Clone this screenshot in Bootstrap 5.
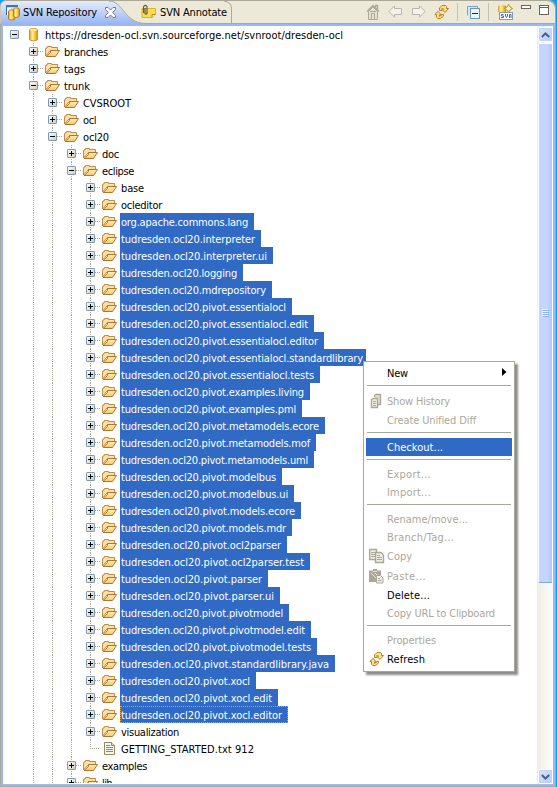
<!DOCTYPE html>
<html lang="en">
<head>
<meta charset="utf-8">
<title>SVN Repository</title>
<link href="https://cdn.jsdelivr.net/npm/bootstrap@5.3.0/dist/css/bootstrap.min.css" rel="stylesheet">
<style>
html,body{height:100%;overflow:hidden}
body{font:11px/17px "DejaVu Sans Condensed","DejaVu Sans",sans-serif;font-stretch:condensed;color:#000;background:#00a0f4;-webkit-font-smoothing:none}
svg{display:block;flex:none}
.view-frame{width:556px;height:787px;background:#aca899;border-radius:6px 7px 0 0;overflow:hidden}
.tabbar{height:24px;width:556px}
.tabbar-bg{left:0;top:0;z-index:0}
.tabbar-row{z-index:1;height:24px}
.tab-text{line-height:18px;margin-top:2px;white-space:nowrap}
.view-body{margin:0 1px 1px;background:#9ab7f2;padding:2px 2px 2px;height:762px}
.view-inner{background:#fff}
.tree{padding-left:2px;overflow:hidden;height:757px}
.tree-line{height:17px}
.guide{width:19px;height:17px;flex:none}
.vline{background:repeating-linear-gradient(#aca899 0 1px,transparent 1px 2px) 9px 0/1px 100% no-repeat}
.vhalf{background-size:1px 9px}
.toggle-cell{width:19px;padding-left:5px}
.hline{height:1px;width:5px;background:repeating-linear-gradient(90deg,#aca899 0 1px,transparent 1px 2px)}
.hline.long{width:10px}
.node-icon{width:16px;height:16px;margin:1px 2px 0 2px}
.label{height:17px;line-height:19px;padding-left:1px;white-space:nowrap}
.picked{background:#316ac5;color:#fff}
.focused{outline:1px dotted #e0a040;outline-offset:-1px}
.scroller{width:16px;background:linear-gradient(90deg,#eeede5,#fefefb);padding:1px 0 0 1px}
.sbtn{width:15px;height:15px;border:1px solid #fff;border-radius:2px;background:linear-gradient(135deg,#dce6fe,#b4c9fa);box-shadow:inset 0 0 0 1px #c0d1fa}
.thumb{height:540px;margin-top:1px;width:15px;border:1px solid #fff;border-bottom-color:#88a4e0;border-radius:2px;background:linear-gradient(90deg,#c2d3fd,#c8d6fb 60%,#b2c8f8)}
.ctx{left:363px;top:361px;width:152px;height:311px;background:#fff;border:1px solid #aca899;padding:2px;box-shadow:3px 3px 2px rgba(0,0,0,.45);z-index:5}
.ctx-item{height:18px;padding-left:3px;color:#000;white-space:nowrap}
.ctx-item.tall{height:20px}
.ctx-item.off{color:#aca899}
.ctx-item.hot{background:#316ac5;color:#fff}
.ctx-icon{width:18px;flex:none}
.ctx-sep{height:9px;padding:3px 1px 0}
.ctx-sep div{height:1px;background:#aca899}
.tsep{width:1px;height:18px;background:#c5c2ae}
</style>
<script src="https://cdn.jsdelivr.net/npm/bootstrap@5.3.0/dist/js/bootstrap.bundle.min.js"></script>
</head>
<body>
<svg width="0" height="0" class="position-absolute">
<defs>
<linearGradient id="gold" x1="0" x2="1"><stop offset="0" stop-color="#e09a1c"/><stop offset=".35" stop-color="#fff0a0"/><stop offset=".65" stop-color="#f8cc40"/><stop offset="1" stop-color="#d08a10"/></linearGradient>
<linearGradient id="flap" x1="0" y1="0" x2="0" y2="1"><stop offset="0" stop-color="#fff0c0"/><stop offset="1" stop-color="#f6c868"/></linearGradient>
<linearGradient id="boxg" x1="0" y1="0" x2="1" y2="1"><stop offset="0" stop-color="#fff"/><stop offset="1" stop-color="#cfc9b8"/></linearGradient>
<linearGradient id="tabg" x1="0" y1="0" x2="0" y2="1"><stop offset="0" stop-color="#e3ecfc"/><stop offset="1" stop-color="#99b6f2"/></linearGradient>
<symbol id="i-folder" viewBox="0 0 16 16"><path d="M.5 12V4.500H1.500V3.500H2.500V2.500H6.500V3.500H12.500V6.500H5.500L.5 12" fill="#fbe2a4" stroke="#c08a48"/><path d="M1 12.500 5.500 8.500V6.500H14.500L10.500 12.500Z" fill="url(#flap)" stroke="#b4742c"/></symbol>
<symbol id="i-plus" viewBox="0 0 9 9"><rect x=".5" y=".5" width="8" height="8" rx=".6" fill="url(#boxg)" stroke="#7898b5"/><path d="M2 4.500H7M4.500 2V7" stroke="#000"/></symbol>
<symbol id="i-minus" viewBox="0 0 9 9"><rect x=".5" y=".5" width="8" height="8" rx=".6" fill="url(#boxg)" stroke="#7898b5"/><path d="M2 4.500H7" stroke="#000"/></symbol>
<symbol id="i-db" viewBox="0 0 16 16"><path d="M3.500 3V12.500C3.500 14.200 11.500 14.200 11.500 12.500V3C11.500 1 3.500 1 3.500 3Z" fill="url(#gold)" stroke="#d0942a"/><ellipse cx="7.500" cy="2.900" rx="3.500" ry="1.100" fill="#ffe98a"/></symbol>
<symbol id="i-file" viewBox="0 0 16 16"><path d="M2.500 1.500H9.500L12.500 4.500V13.500H2.500Z" fill="#f4f7fe" stroke="#9a8a50"/><path d="M9.500 1.500V4.500H12.500" fill="#e8d9a0" stroke="#9a8a50"/><path d="M4 4.500H8M4 6.500H11M4 8.500H11M4 10.500H11" stroke="#6a88c8"/></symbol>
<symbol id="i-refresh" viewBox="0 0 16 16"><path d="M5.500 6.500V4L8 1.500H11.500L12.500 2.500V4.500H14.500L11 8.500 7.500 4.800H9.500L8 6.500Z" fill="#fde088" stroke="#bd801c" stroke-linejoin="round"/><path d="M.8 10.500 4 7.500 7.500 10.800H5.500V12.500L8 10.500H9.500V12L6.500 14.500H3.500L2.500 13.500V10.500Z" fill="#fde088" stroke="#bd801c" stroke-linejoin="round"/></symbol>
</defs>
</svg>

<div class="view-frame position-relative">
  <div class="tabbar position-relative">
    <svg class="tabbar-bg position-absolute" width="556" height="24" viewBox="0 0 556 24">
      <path d="M0 24V6Q1 1 6 .5H547Q554 1 555.500 8V24Z" fill="#ece9d8" stroke="#aca899"/>
      <path d="M1 24V6Q2 1.500 6 1.500H109C124 1.500 124 23.500 146 23.500V24Z" fill="url(#tabg)"/>
      <path d="M109 1C124 1.500 124 23.500 146 23.500H556M224 1Q231.500 2 231.500 9V23" fill="none" stroke="#aca899"/>
    </svg>
    <div class="tabbar-row d-flex align-items-center position-relative">
      <svg width="17" height="18" style="margin-left:5px" viewBox="0 -1 17 18"><path d="M1.500 11V2.500H12.500" fill="none" stroke="#3564b0"/><path d="M1 2H13" stroke="#3e72c8" stroke-width="2"/><path d="M2 4H6V11H2Z" fill="#fff"/><path d="M3.500 7V15C4 16.300 9 16.300 10 15V7C9 5.500 4 5.500 3.500 7Z" fill="url(#gold)" stroke="#c07c14"/><path d="M8.500 5V12C9 14 13.500 14 14.500 12V5C13.500 3.500 9 3.500 8.500 5Z" fill="url(#gold)" stroke="#c07c14"/></svg>
      <span class="tab-text" data-w="74" style="margin-left:1px">SVN Repository</span>
      <svg width="11" height="12" style="margin-left:8px" viewBox="0 -1 11 12"><path d="M.5.5H3L5.500 3 8 .5H10.500V2.500L7.500 5.500 10.500 8.500V10.500H8L5.500 8 3 10.500H.5V8.500L3.500 5.500.5 2.500Z" fill="#fff" stroke="#77778a"/></svg>
      <svg width="16" height="16" style="margin-left:25px" viewBox="0 0 16 16"><path d="M1 4.500H14.500V10.500L11 13.500H1Z" fill="#fbdc50" stroke="#e2b414"/><path d="M14.500 10.500H11V13.500" fill="#fff3b0" stroke="#b98a10"/><path d="M2.500 9V3Q4 0 6 2.500V9.500Q4.500 11 4 9V4" fill="none" stroke="#5b5b60" stroke-width="1.200"/></svg>
      <span class="tab-text" data-w="67" style="margin-left:3px">SVN Annotate</span>
      <div class="ms-auto d-flex align-items-center">
        <svg width="14" height="16" viewBox="0 0 14 16"><path d="M1 7.500 7 1.500 13 7.500M9.500 3V1.500H11.500V6" fill="none" stroke="#aca899" stroke-width="1.400"/><path d="M2.500 7.500V15.500H11.500V7.500L7 3Z" fill="#e6e2d0" stroke="#aca899"/><path d="M5.500 15V9.500H8.500V15M4 7.500H10" fill="none" stroke="#aca899"/></svg>
        <svg width="15" height="14" style="margin-left:8px" viewBox="0 -.5 15 14"><path d="M.8 6 6.500.5V3H13.500V9H6.500V11.500Z" fill="#f4f2ea" stroke="#b7b5ac"/></svg>
        <svg width="15" height="14" style="margin-left:8px" viewBox="0 -.5 15 14"><path d="M14.200 6 8.500.5V3H1.500V9H8.500V11.500Z" fill="#f4f2ea" stroke="#b7b5ac"/></svg>
        <svg width="16" height="16" style="margin-left:8px"><use href="#i-refresh"/></svg>
        <div class="tsep" style="margin-left:7px"></div>
        <svg width="14" height="16" style="margin-left:9px" viewBox="0 -2 14 16"><path d="M.5 9.500V.5H10.500V3" fill="#cfe5f5" stroke="#7aa6c8"/><rect x="3.500" y="2.500" width="9" height="10" fill="#e8f7ff" stroke="#6a94b8"/><path d="M5 7.500H11" stroke="#102858"/></svg>
        <div class="tsep" style="margin-left:7px"></div>
        <svg width="16" height="16" style="margin-left:8px" viewBox="0 0 16 16"><path d="M1 2V8H9V2Q5 0 1 2Z" fill="url(#gold)"/><path d="M11.500.5 13 3 15.500 4.500 13 6 11.500 8.500 10 6 7.500 4.500 10 3Z" fill="#fff3b0" stroke="#c48a18"/><rect x="2.500" y="8.500" width="13" height="7" fill="#fff" stroke="#8a98b8"/><path d="M6.500 10.500H4.500V12H6.500V13.500H4M8.500 10V12L9.500 13.500 10.500 12V10M12.500 14V10.500H14V14" fill="none" stroke="#506898"/></svg>
        <svg width="10" height="16" style="margin-left:8px" viewBox="0 0 10 16"><rect x=".5" y="1.500" width="9" height="3" fill="#fff" stroke="#66645c"/></svg>
        <svg width="10" height="16" style="margin:0 7px 0 8px" viewBox="0 0 10 16"><rect x=".5" y="1.500" width="9" height="9" fill="#fff" stroke="#66645c"/><path d="M0 3.500H10" stroke="#66645c"/></svg>
      </div>
    </div>
  </div>

  <div class="view-body">
    <div class="view-inner d-flex h-100">
      <div class="tree flex-grow-1" id="tree"></div>
      <div class="scroller d-flex flex-column">
        <div class="sbtn d-flex align-items-center justify-content-center"><svg width="9" height="6" viewBox="0 0 9 6"><path d="M.8 5 4.500 1.500 8.200 5" fill="none" stroke="#4d6185" stroke-width="2"/></svg></div>
        <div class="thumb d-flex align-items-center justify-content-center"><svg width="8" height="9" viewBox="0 0 8 9"><path d="M0 .5H6M0 2.500H6M0 4.500H6M0 6.500H6" stroke="#eef4fe"/><path d="M1 1.500H7M1 3.500H7M1 5.500H7M1 7.500H7" stroke="#8cb0f8"/></svg></div>
        <div class="sbtn mt-auto d-flex align-items-center justify-content-center"><svg width="9" height="6" viewBox="0 0 9 6"><path d="M.8 1 4.500 4.500 8.200 1" fill="none" stroke="#4d6185" stroke-width="2"/></svg></div>
      </div>
    </div>
  </div>

  <div class="ctx position-absolute">
    <div class="ctx-item d-flex align-items-center"><span class="ctx-icon"></span><span data-w="21">New</span><svg class="ms-auto" style="margin:-2px 5px 0 0" width="5" height="8" viewBox="0 0 5 8"><path d="M0 0 4.500 4 0 8Z"/></svg></div>
    <div class="ctx-sep"><div></div></div>
    <div class="ctx-item tall off d-flex align-items-center"><span class="ctx-icon"><svg width="16" height="16" viewBox="0 0 16 16"><path d="M5.500 4V2.500L7 1.500H11.500V11.500H9" fill="#e2dfcc" stroke="#aca899" stroke-width="1.400"/><path d="M2.500 6.500 4 5.500H8.500V14.500H2.500Z" fill="#f1efe2" stroke="#aca899" stroke-width="1.400"/><path d="M4 8.500H7M4 10.500H7M4 12.500H7" stroke="#aca899"/></svg></span><span data-w="63">Show History</span></div>
    <div class="ctx-item off d-flex align-items-center"><span class="ctx-icon"></span><span data-w="89">Create Unified Diff</span></div>
    <div class="ctx-sep"><div></div></div>
    <div class="ctx-item hot d-flex align-items-center"><span class="ctx-icon"></span><span data-w="56">Checkout...</span></div>
    <div class="ctx-sep"><div></div></div>
    <div class="ctx-item off d-flex align-items-center"><span class="ctx-icon"></span><span data-w="44">Export...</span></div>
    <div class="ctx-item off d-flex align-items-center"><span class="ctx-icon"></span><span data-w="44">Import...</span></div>
    <div class="ctx-sep"><div></div></div>
    <div class="ctx-item off d-flex align-items-center"><span class="ctx-icon"></span><span data-w="81">Rename/move...</span></div>
    <div class="ctx-item off d-flex align-items-center"><span class="ctx-icon"></span><span data-w="67">Branch/Tag...</span></div>
    <div class="ctx-item tall off d-flex align-items-center"><span class="ctx-icon"><svg width="16" height="16" viewBox="0 0 16 16"><path d="M.700 1.500H7.500V11.500H.700Z" fill="#f1efe2" stroke="#aca899" stroke-width="1.400"/><path d="M2 4.500H6M2 6.500H6M2 8.500H6" stroke="#aca899"/><path d="M6.500 4.500H12L14.500 7V14.500H6.500Z" fill="#f1efe2" stroke="#aca899" stroke-width="1.400"/><path d="M8 7.500H11M8 9.500H13M8 11.500H13" stroke="#aca899"/></svg></span><span data-w="25">Copy</span></div>
    <div class="ctx-item tall off d-flex align-items-center"><span class="ctx-icon"><svg width="16" height="16" viewBox="0 0 16 16"><path d="M0 2.500H4V1H8V2.500H12V14H0Z" fill="#aca899"/><path d="M4 3.500H8M2 5 7 10M6 5 9 8" stroke="#e6e3d4"/><path d="M7.500 7.500H11.500L14 10V15H7.500Z" fill="#f1efe2" stroke="#aca899"/><path d="M9 10.500H11M9 12.500H12.500" stroke="#aca899"/></svg></span><span data-w="39">Paste...</span></div>
    <div class="ctx-item d-flex align-items-center"><span class="ctx-icon"></span><span data-w="43">Delete...</span></div>
    <div class="ctx-item off d-flex align-items-center"><span class="ctx-icon"></span><span data-w="108">Copy URL to Clipboard</span></div>
    <div class="ctx-sep"><div></div></div>
    <div class="ctx-item off d-flex align-items-center"><span class="ctx-icon"></span><span data-w="49">Properties</span></div>
    <div class="ctx-item tall d-flex align-items-center"><span class="ctx-icon"><svg width="16" height="16"><use href="#i-refresh"/></svg></span><span data-w="38">Refresh</span></div>
  </div>
</div>

<script>
// [level, state (+ collapsed, - expanded, . leaf), name, text width, selected]
const p = 'tudresden.ocl20.';
const nodes = [
 [0,'-','https://dresden-ocl.svn.sourceforge.net/svnroot/dresden-ocl',298],
 [1,'+','branches',44],[1,'+','tags',21],[1,'-','trunk',26],
 [2,'+','CVSROOT',48],[2,'+','ocl',13],[2,'-','ocl20',26],
 [3,'+','doc',17],[3,'-','eclipse',32],
 [4,'+','base',23],[4,'+','ocleditor',41],
 [4,'+','org.apache.commons.lang',127,1],
 ...[['interpreter',134],['interpreter.ui',146],['logging',116],['mdrepository',145],
  ['pivot.essentialocl',165],['pivot.essentialocl.edit',187],['pivot.essentialocl.editor',197],
  ['pivot.essentialocl.standardlibrary',242],['pivot.essentialocl.tests',193],
  ['pivot.examples.living',183],['pivot.examples.pml',175],['pivot.metamodels.ecore',198],
  ['pivot.metamodels.mof',189],['pivot.metamodels.uml',187],['pivot.modelbus',155],
  ['pivot.modelbus.ui',167],['pivot.models.ecore',174],['pivot.models.mdr',165],
  ['pivot.ocl2parser',160],['pivot.ocl2parser.test',183],['pivot.parser',141],
  ['pivot.parser.ui',153],['pivot.pivotmodel',162],['pivot.pivotmodel.edit',184],
  ['pivot.pivotmodel.tests',190],['pivot.standardlibrary.java',208],['pivot.xocl',129],
  ['pivot.xocl.edit',151],['pivot.xocl.editor',161]].map(([n,w]) => [4,'+',p+n,w,1]),
 [4,'+','visualization',58],[4,'.','GETTING_STARTED.txt 912',133],
 [3,'+','examples',45],[3,'+','lib',10]
];
const svg = (id, s) => `<svg width="${s}" height="${s}"><use href="#${id}"/></svg>`;
document.getElementById('tree').innerHTML = nodes.map(([lv, st, name, w, sel]) => {
  let guides = '';
  for (let i = 0; i < lv; i++) guides += `<div class="guide ${i ? 'vline' : ''}"></div>`;
  const leaf = st === '.';
  const cell = leaf
    ? '<div class="guide vline vhalf d-flex align-items-center"><div class="hline long ms-auto"></div></div>'
    : `<div class="guide toggle-cell d-flex align-items-center ${lv ? 'vline' : ''}">${svg(st === '+' ? 'i-plus' : 'i-minus', 9)}${lv ? '<div class="hline"></div>' : ''}</div>`;
  const icon = lv === 0 ? 'i-db' : leaf ? 'i-file' : 'i-folder';
  const focus = name.endsWith('xocl.editor') ? 'focused' : '';
  const bw = name.endsWith('standardlibrary') ? w + 4 : w + 7;
  return `<div class="tree-line d-flex align-items-start">${guides}${cell}<div class="node-icon">${svg(icon, 16)}</div><div class="label ${sel ? 'picked' : ''} ${focus}" style="width:${bw}px"><span data-w="${w}">${name}</span></div></div>`;
}).join('');
// Spread each text over its own width
document.querySelectorAll('[data-w]').forEach(e => {
  const d = +e.dataset.w - e.getBoundingClientRect().width;
  e.style.letterSpacing = (d / e.textContent.length) + 'px';
});
</script>
</body>
</html>
